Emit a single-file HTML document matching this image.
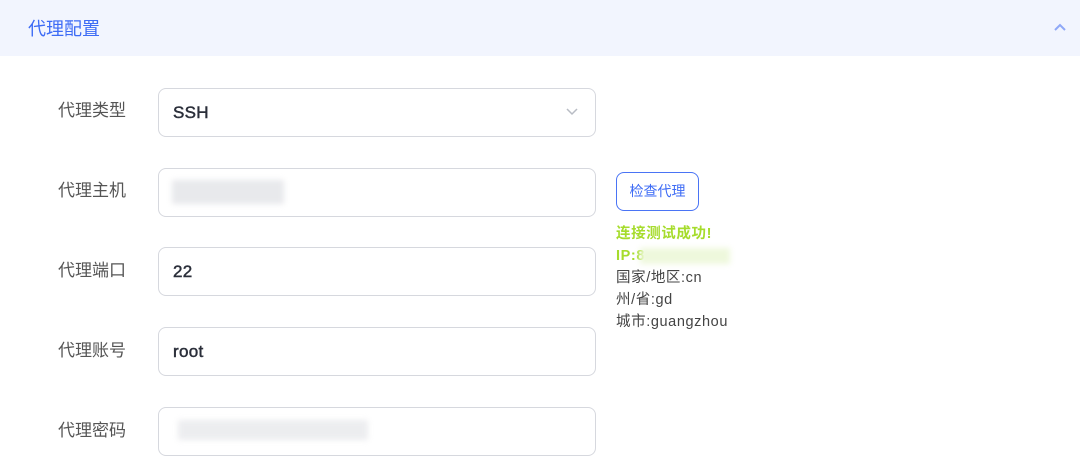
<!DOCTYPE html>
<html><head><meta charset="utf-8"><style>
*{margin:0;padding:0;box-sizing:border-box}
body{width:1080px;height:465px;background:#fff;font-family:"Liberation Sans","Noto Sans CJK SC",sans-serif;position:relative;overflow:hidden}
.hd{position:absolute;left:0;top:0;width:1080px;height:56px;background:#f2f5fe}
.hd .t{position:absolute;left:28px;top:15px;font-size:18px;color:#3d6bf5}
.lbl{position:absolute;left:58px;font-size:17px;color:#555;line-height:20px}
.in{position:absolute;left:158px;width:438px;height:49px;border:1px solid #d6d8de;border-radius:8px;font-size:17px;color:#2b2f3a;padding-left:14px;line-height:47px;-webkit-text-stroke:0.5px #2b2f3a;letter-spacing:0.3px}
.btn{position:absolute;left:616px;top:172px;width:83px;height:39px;border:1px solid #4a74f5;border-radius:8px;color:#3d6bf5;font-size:14px;text-align:center;line-height:37px}
.r{position:absolute;left:616px;font-size:14.5px;line-height:18px;color:#444;letter-spacing:0.6px}
.g{color:#a6dc2c;font-weight:bold}
.blur{position:absolute;background:#e8e9ec;filter:blur(3px)}
</style></head><body>
<div class="hd"><div class="t">代理配置</div>
<svg style="position:absolute;left:1053px;top:22px" width="14" height="10"><path d="M2 8 L7 3 L12 8" stroke="#8fa8f7" stroke-width="2" fill="none"/></svg></div>
<div class="lbl" style="top:101px">代理类型</div>
<div class="lbl" style="top:181px">代理主机</div>
<div class="lbl" style="top:261px">代理端口</div>
<div class="lbl" style="top:341px">代理账号</div>
<div class="lbl" style="top:421px">代理密码</div>
<div class="in" style="top:88px">SSH<svg style="position:absolute;right:16px;top:18px" width="14" height="10"><path d="M2 2 L7 7 L12 2" stroke="#b8bcc4" stroke-width="1.5" fill="none"/></svg></div>
<div class="in" style="top:168px"></div>
<div class="blur" style="left:172px;top:180px;width:112px;height:24px"></div>
<div class="in" style="top:247px">22</div>
<div class="in" style="top:327px">root</div>
<div class="in" style="top:407px"></div>
<div class="blur" style="left:178px;top:420px;width:190px;height:20px;opacity:.8"></div>
<div class="btn">检查代理</div>
<div class="r g" style="top:225px">连接测试成功!</div>
<div class="r g" style="top:247px">IP:8</div>
<div class="blur" style="left:640px;top:248px;width:90px;height:16px;background:#eef8dc"></div>
<div class="r" style="top:269px">国家/地区:cn</div>
<div class="r" style="top:291px">州/省:gd</div>
<div class="r" style="top:313px">城市:guangzhou</div>
</body></html>
